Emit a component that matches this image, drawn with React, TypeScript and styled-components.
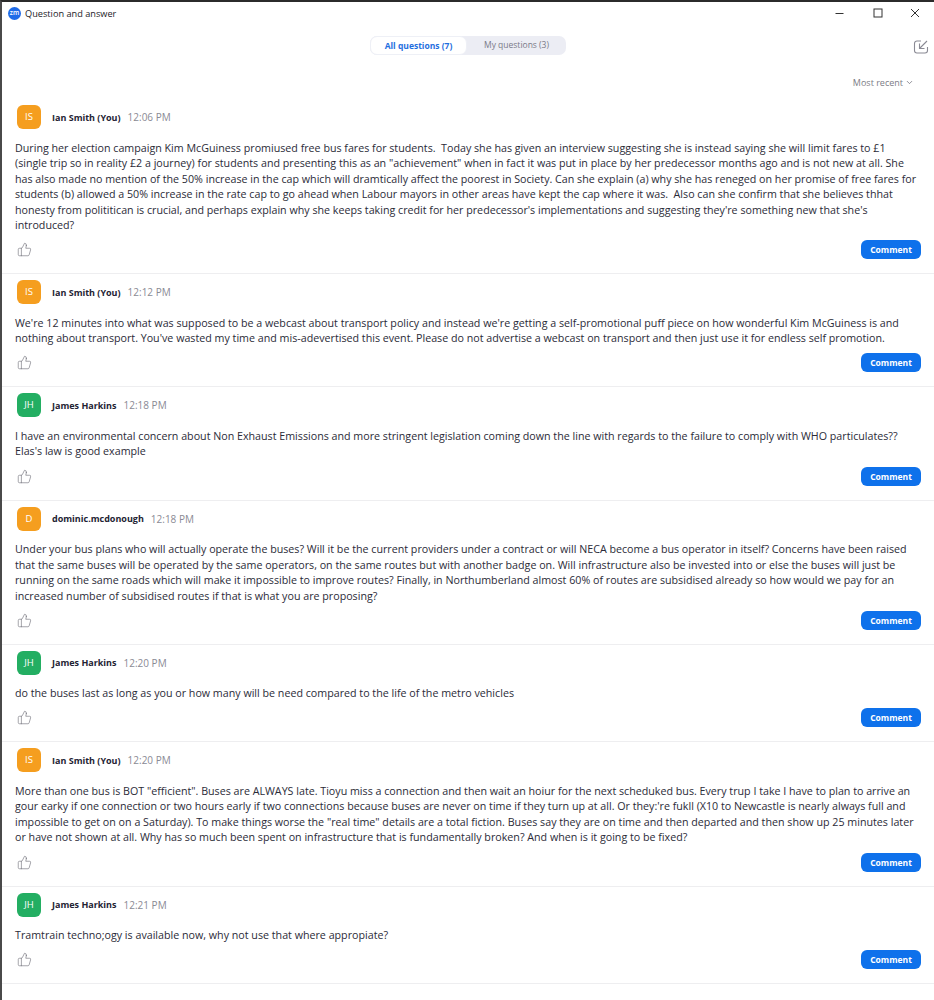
import React from 'react';
import styled, { createGlobalStyle } from 'styled-components';
import { ThumbsUp, ChevronDown } from 'lucide-react';

const GlobalStyle = createGlobalStyle`
  html, body {
    margin: 0;
    padding: 0;
    background: #ffffff;
  }
  body {
    font-family: "Open Sans", "Noto Sans", "Liberation Sans", sans-serif;
    color: #232333;
  }
`;

const Window = styled.div`
  width: 934px;
  height: 1000px;
  box-sizing: border-box;
  border-top: 2px solid #2b2b2b;
  border-left: 2px solid #4a4a4a;
  overflow: hidden;
  background: #ffffff;
`;

const TitleBar = styled.header`
  height: 22px;
  display: flex;
  align-items: center;
  padding-left: 6px;
  gap: 4px;
`;

const Logo = styled.div`
  width: 13px;
  height: 13px;
  border-radius: 50%;
  background: #1f6be8;
  color: #ffffff;
  font-size: 6.5px;
  font-weight: 600;
  line-height: 12px;
  text-align: center;
`;

const WindowTitle = styled.span`
  font-size: 9.2px;
  color: #1c1c28;
  flex: 1;
`;

const WindowControls = styled.div`
  display: flex;
  align-items: center;
`;

const ControlButton = styled.div`
  width: 37.5px;
  height: 22px;
  display: flex;
  align-items: center;
  justify-content: center;
`;

const TabRow = styled.div`
  height: 19px;
  margin-top: 12px;
  display: flex;
  align-items: center;
  justify-content: center;
  position: relative;
`;

const Tabs = styled.div`
  display: flex;
  width: 196px;
  height: 19px;
  border-radius: 7px;
  background: #ecedf4;
`;

const Tab = styled.div<{ $active?: boolean }>`
  flex: ${({ $active }) => ($active ? '0 0 97px' : '1')};
  border-radius: 7px;
  border: ${({ $active }) => ($active ? '1px solid #eef0f6' : 'none')};
  box-sizing: border-box;
  background: ${({ $active }) => ($active ? '#ffffff' : 'transparent')};
  color: ${({ $active }) => ($active ? '#1f6fe0' : '#7a7a88')};
  font-size: 8.5px;
  font-weight: ${({ $active }) => ($active ? 700 : 400)};
  line-height: 18px;
  text-align: center;
`;

const PopIn = styled.div`
  position: absolute;
  right: 5px;
  top: 2px;
  width: 16px;
  height: 16px;
`;

const SortRow = styled.div`
  height: 15px;
  margin-top: 20px;
  padding-right: 20px;
  display: flex;
  justify-content: flex-end;
  align-items: center;
  gap: 2px;
  font-size: 9px;
  color: #7c7c86;
`;

const List = styled.div`
  margin-top: 9px;
`;

const Card = styled.article`
  box-sizing: border-box;
  padding: 6px 13px 0 13px;
  border-bottom: 1px solid #eeeef0;
`;

const CardHeader = styled.div`
  display: flex;
  align-items: center;
  height: 24px;
  padding-left: 2px;
`;

const Avatar = styled.div<{ $color: string }>`
  width: 24px;
  height: 24px;
  border-radius: 6px;
  background: ${({ $color }) => $color};
  color: #ffffff;
  font-size: 9.5px;
  line-height: 24px;
  text-align: center;
`;

const Name = styled.span`
  margin-left: 11px;
  font-size: 9px;
  font-weight: 700;
  color: #232333;
`;

const Time = styled.span`
  margin-left: 7px;
  font-size: 10px;
  color: #8a8a94;
`;

const Body = styled.div`
  margin-top: 11.5px;
  font-size: 10.7px;
  line-height: 15.5px;
  color: #2b2b38;
`;

const Line = styled.div`
  white-space: pre;
`;

const Actions = styled.div`
  display: flex;
  align-items: center;
  justify-content: space-between;
  height: 19px;
  margin-top: 6.7px;
  padding-left: 2px;
  margin-bottom: 14px;
`;

const Comment = styled.button`
  width: 60px;
  height: 19px;
  padding: 0;
  border: none;
  border-radius: 6px;
  background: #0e71eb;
  color: #ffffff;
  font-family: inherit;
  font-size: 8.5px;
  font-weight: 700;
`;

const ORANGE = '#f59e1f';
const GREEN = '#23ae62';

interface Question {
  initials: string;
  color: string;
  name: string;
  time: string;
  lines: string[];
}

const questions: Question[] = [
  {
    initials: 'IS',
    color: ORANGE,
    name: 'Ian Smith (You)',
    time: '12:06 PM',
    lines: [
      'During her election campaign Kim McGuiness promiused free bus fares for students.  Today she has given an interview suggesting she is instead saying she will limit fares to £1',
      '(single trip so in reality £2 a journey) for students and presenting this as an "achievement" when in fact it was put in place by her predecessor months ago and is not new at all. She',
      'has also made no mention of the 50% increase in the cap which will dramtically affect the poorest in Society. Can she explain (a) why she has reneged on her promise of free fares for',
      'students (b) allowed a 50% increase in the rate cap to go ahead when Labour mayors in other areas have kept the cap where it was.  Also can she confirm that she believes thhat',
      "honesty from polititican is crucial, and perhaps explain why she keeps taking credit for her predecessor's implementations and suggesting they're something new that she's",
      'introduced?',
    ],
  },
  {
    initials: 'IS',
    color: ORANGE,
    name: 'Ian Smith (You)',
    time: '12:12 PM',
    lines: [
      "We're 12 minutes into what was supposed to be a webcast about transport policy and instead we're getting a self-promotional puff piece on how wonderful Kim McGuiness is and",
      "nothing about transport. You've wasted my time and mis-adevertised this event. Please do not advertise a webcast on transport and then just use it for endless self promotion.",
    ],
  },
  {
    initials: 'JH',
    color: GREEN,
    name: 'James Harkins',
    time: '12:18 PM',
    lines: [
      'I have an environmental concern about Non Exhaust Emissions and more stringent legislation coming down the line with regards to the failure to comply with WHO particulates??',
      "Elas's law is good example",
    ],
  },
  {
    initials: 'D',
    color: ORANGE,
    name: 'dominic.mcdonough',
    time: '12:18 PM',
    lines: [
      'Under your bus plans who will actually operate the buses? Will it be the current providers under a contract or will NECA become a bus operator in itself? Concerns have been raised',
      'that the same buses will be operated by the same operators, on the same routes but with another badge on. Will infrastructure also be invested into or else the buses will just be',
      'running on the same roads which will make it impossible to improve routes? Finally, in Northumberland almost 60% of routes are subsidised already so how would we pay for an',
      'increased number of subsidised routes if that is what you are proposing?',
    ],
  },
  {
    initials: 'JH',
    color: GREEN,
    name: 'James Harkins',
    time: '12:20 PM',
    lines: ['do the buses last as long as you or how many will be need compared to the life of the metro vehicles'],
  },
  {
    initials: 'IS',
    color: ORANGE,
    name: 'Ian Smith (You)',
    time: '12:20 PM',
    lines: [
      'More than one bus is BOT "efficient". Buses are ALWAYS late. Tioyu miss a connection and then wait an hoiur for the next scheduked bus. Every trup I take I have to plan to arrive an',
      "gour earky if one connection or two hours early if two connections because buses are never on time if they turn up at all. Or they:'re fukll (X10 to Newcastle is nearly always full and",
      'impossible to get on on a Saturday). To make things worse the "real time" details are a total fiction. Buses say they are on time and then departed and then show up 25 minutes later',
      'or have not shown at all. Why has so much been spent on infrastructure that is fundamentally broken? And when is it going to be fixed?',
    ],
  },
  {
    initials: 'JH',
    color: GREEN,
    name: 'James Harkins',
    time: '12:21 PM',
    lines: ['Tramtrain techno;ogy is available now, why not use that where appropiate?'],
  },
];

export default function App() {
  return (
    <>
      <GlobalStyle />
      <Window>
        <TitleBar>
          <Logo>zm</Logo>
          <WindowTitle>Question and answer</WindowTitle>
          <WindowControls>
            <ControlButton>
              <svg width="10" height="10" viewBox="0 0 10 10">
                <path d="M0.5 5.5h8" stroke="#333" strokeWidth="1" fill="none" />
              </svg>
            </ControlButton>
            <ControlButton>
              <svg width="10" height="10" viewBox="0 0 10 10">
                <rect x="1" y="1" width="8" height="8" stroke="#333" strokeWidth="1" fill="none" />
              </svg>
            </ControlButton>
            <ControlButton>
              <svg width="10" height="10" viewBox="0 0 10 10">
                <path d="M1 1l8 8M9 1l-8 8" stroke="#333" strokeWidth="1" fill="none" />
              </svg>
            </ControlButton>
          </WindowControls>
        </TitleBar>
        <TabRow>
          <Tabs>
            <Tab $active>All questions (7)</Tab>
            <Tab>My questions (3)</Tab>
          </Tabs>
          <PopIn>
            <svg width="16" height="16" viewBox="0 0 16 16" fill="none" stroke="#8a8a94" strokeWidth="1.1">
              <path d="M8 2H4a2.5 2.5 0 0 0-2.5 2.5v7A2.5 2.5 0 0 0 4 14h8a2.5 2.5 0 0 0 2.5-2.5V8" />
              <path d="M14 2L7 9M6.5 4.5V9.5H11.5" />
            </svg>
          </PopIn>
        </TabRow>
        <SortRow>
          Most recent
          <ChevronDown size={9} strokeWidth={2} color="#6e6e78" />
        </SortRow>
        <List>
          {questions.map((q, i) => (
            <Card key={i}>
              <CardHeader>
                <Avatar $color={q.color}>{q.initials}</Avatar>
                <Name>{q.name}</Name>
                <Time>{q.time}</Time>
              </CardHeader>
              <Body>
                {q.lines.map((line, j) => (
                  <Line key={j}>{line}</Line>
                ))}
              </Body>
              <Actions>
                <ThumbsUp size={15} strokeWidth={1} color="#6e6e78" />
                <Comment>Comment</Comment>
              </Actions>
            </Card>
          ))}
        </List>
      </Window>
    </>
  );
}
